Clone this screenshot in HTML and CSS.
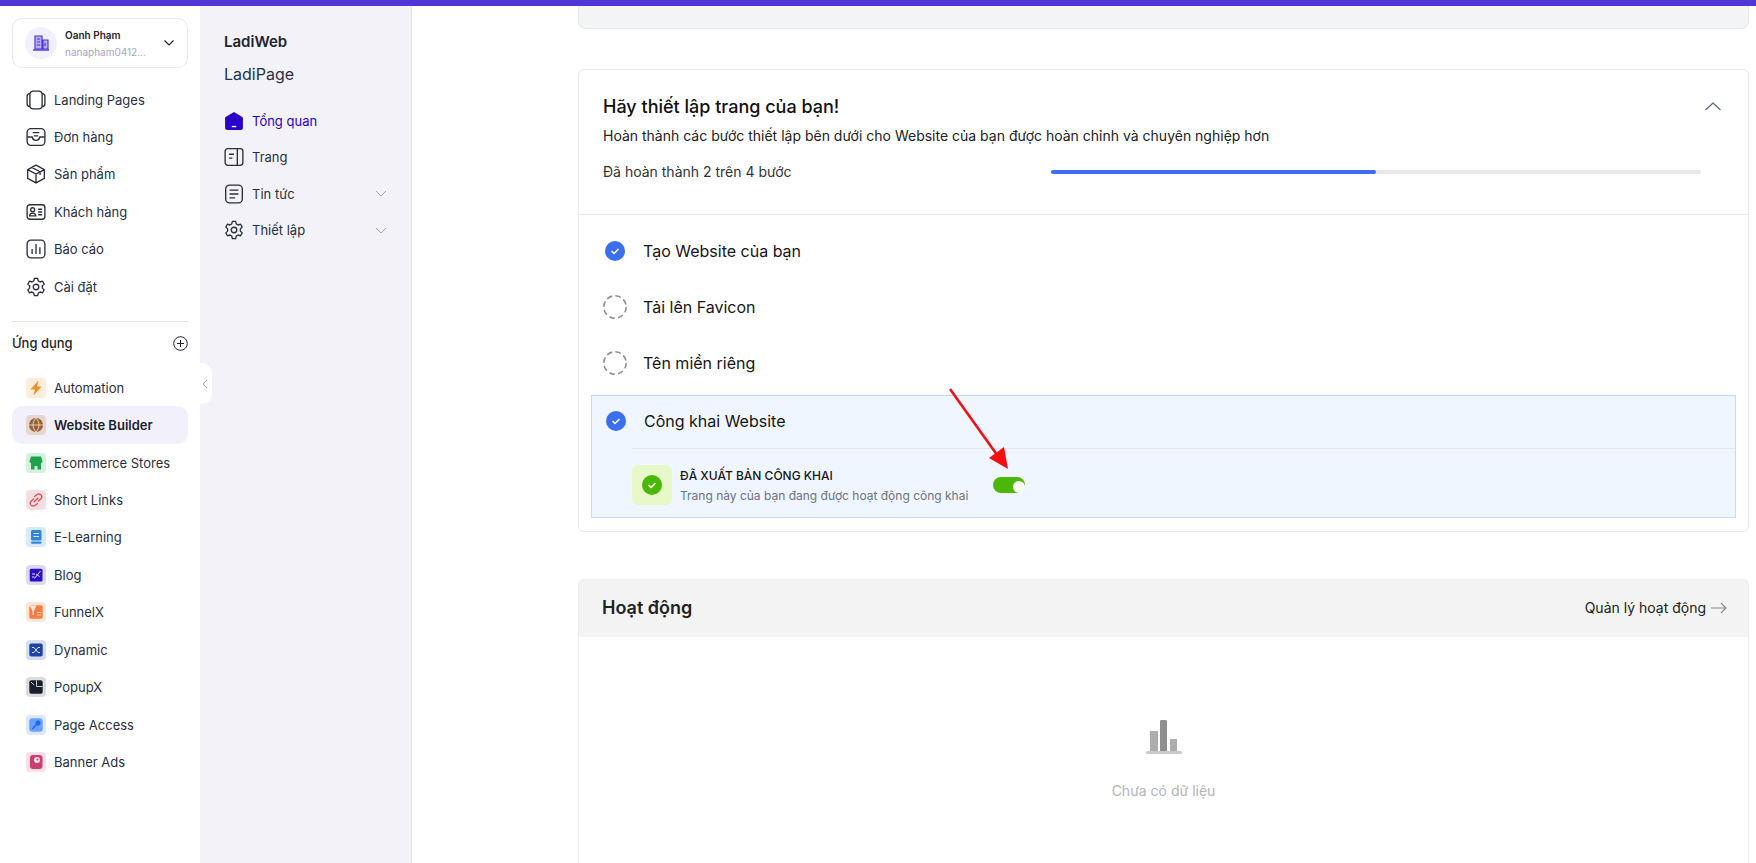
FILE: index.html

```html
<!DOCTYPE html>
<html lang="vi">
<head>
    <meta charset="UTF-8">
    <title>LadiWeb</title>
    <link rel="stylesheet" href="styles.css">
</head>
<body>
    <div class="topbar"></div>
    <div class="app">
        <aside class="sidebar">
            <div class="account">
                <div class="avatar">
                    <svg width="18" height="18" viewBox="0 0 18 18"><path d="M3 2h7v13H3zM11 6h5v9h-5z" fill="#b9aef0" stroke="#4f35d6" stroke-width="1.2"/><path d="M1 16h16" stroke="#4f35d6" stroke-width="1.4"/><path d="M5 5h3M5 8h3M5 11h3M13 9v3" stroke="#4f35d6" stroke-width="1.2"/></svg>
                </div>
                <div class="account-text">
                    <div class="account-name">Oanh Phạm</div>
                    <div class="account-mail">nanapham0412...</div>
                </div>
                <svg class="account-caret" width="12" height="8" viewBox="0 0 12 8"><path d="M1.500 1.500 6 6l4.500-4.500" fill="none" stroke="#1f2430" stroke-width="1.200"/></svg>
            </div>

            <nav class="nav">
                <a class="nav-row">
                    <svg class="line-icon" viewBox="0 0 18 18"><rect x="3.500" y="1" width="11" height="16" rx="3"/><path d="M3.500 3C2 3.300 1 4 1 5.500v7c0 1.500 1 2.200 2.500 2.500M14.500 3c1.500.3 2.500 1 2.500 2.500v7c0 1.500-1 2.200-2.500 2.500"/></svg>
                    Landing Pages
                </a>
                <a class="nav-row">
                    <svg class="line-icon" viewBox="0 0 18 18"><rect x="1" y="1.500" width="16" height="15" rx="3.500"/><path d="M1 9h4.500c.5 2 1.800 3 3.500 3s3-1 3.500-3H17M6 5h6M7 8h4"/></svg>
                    Đơn hàng
                </a>
                <a class="nav-row">
                    <svg class="line-icon" viewBox="0 0 18 18"><path d="M9 1l7.500 4v8L9 17l-7.500-4V5zM1.500 5 9 9l7.500-4M9 9v8M5.200 3l7.500 4v3"/></svg>
                    Sản phẩm
                </a>
                <a class="nav-row">
                    <svg class="line-icon" viewBox="0 0 18 18"><rect x="1" y="2.500" width="16" height="13" rx="2.500"/><circle cx="6" cy="7" r="1.800"/><path d="M3.200 12.500c.2-1.800 1.300-2.500 2.800-2.500s2.600.7 2.800 2.500zM11 6.500h3.500M11 9h3.500M11 11.500h3.500"/></svg>
                    Khách hàng
                </a>
                <a class="nav-row">
                    <svg class="line-icon" viewBox="0 0 18 18"><rect x="1" y="1" width="16" height="16" rx="3.500"/><path d="M5.500 9v4.500M9 4.500v9M12.500 7.500v6"/></svg>
                    Báo cáo
                </a>
                <a class="nav-row">
                    <svg class="line-icon" viewBox="0 0 18 18"><circle cx="9" cy="9" r="2.500"/><path d="M7.500 1.300h3l.5 2.200 1.700 1 2.200-.7 1.500 2.600-1.700 1.600v2l1.700 1.600-1.500 2.600-2.200-.7-1.700 1-.5 2.200h-3l-.5-2.200-1.700-1-2.200.7-1.500-2.600 1.700-1.600v-2L1.600 6.400l1.500-2.600 2.200.7 1.700-1z" stroke-linejoin="round"/></svg>
                    Cài đặt
                </a>
            </nav>

            <div class="apps-head">
                <span>Ứng dụng</span>
                <svg width="15" height="15" viewBox="0 0 15 15"><circle cx="7.500" cy="7.500" r="6.800" fill="none" stroke="#1f2430"/><path d="M7.500 4v7M4 7.500h7" stroke="#1f2430"/></svg>
            </div>

            <nav class="apps">
                <a class="app-row">
                    <span class="app-icon tint-orange"><svg viewBox="0 0 20 20"><path d="M12.500 2.500 4.500 11.500H9L7.500 17.500 15.500 8.500H11z" fill="#e8912d"/></svg></span>
                    Automation
                </a>
                <a class="app-row active">
                    <span class="app-icon tint-brown"><svg viewBox="0 0 20 20"><circle cx="10" cy="10" r="7" fill="#9a6233"/><path d="M3 10h14M10 3c-4 4.500-4 9.500 0 14M10 3c4 4.500 4 9.500 0 14" fill="none" stroke="#e4d7ce" stroke-width=".9"/></svg></span>
                    Website Builder
                </a>
                <a class="app-row">
                    <span class="app-icon tint-green"><svg viewBox="0 0 20 20"><path d="M5 3.500h10l1.500 4.500c0 1.500-1 2-1.500 2v6.500h-3.500V13h-3v3.500H5V10c-.5 0-1.500-.5-1.500-2z" fill="#1fa34a"/></svg></span>
                    Ecommerce Stores
                </a>
                <a class="app-row">
                    <span class="app-icon tint-red"><svg viewBox="0 0 20 20"><path d="M8.500 6.500 11 4.500c1.500-1 3.500-.5 4.300.8.800 1.400.4 3-.8 4L12.500 11M11.500 13.500 9 15.500c-1.500 1-3.500.5-4.300-.8-.8-1.400-.4-3 .8-4l2-1.700M8 12l4-4" fill="none" stroke="#d9484f" stroke-width="1.200" stroke-linecap="round"/></svg></span>
                    Short Links
                </a>
                <a class="app-row">
                    <span class="app-icon tint-blue"><svg viewBox="0 0 20 20"><rect x="5" y="3" width="10.500" height="10.500" rx="1.500" fill="#2f86d8"/><rect x="5" y="14.500" width="10.500" height="2.200" rx="1" fill="#2f86d8"/><path d="M7.500 6.500h5.500M7.500 9.500h5.500" stroke="#d8e9f9"/></svg></span>
                    E-Learning
                </a>
                <a class="app-row">
                    <span class="app-icon tint-violet"><svg viewBox="0 0 20 20"><rect x="3.700" y="3.700" width="12.800" height="12.800" rx="1.500" fill="#2a0fc4"/><path d="M6 9H9M6 12H8.500M8.500 13.500l6-7.500M10 9l3.500 2.500" stroke="#e0dcfa" fill="none"/></svg></span>
                    Blog
                </a>
                <a class="app-row">
                    <span class="app-icon tint-peach"><svg viewBox="0 0 20 20"><rect x="3.300" y="3.300" width="13.400" height="13.400" rx="2" fill="#ff7a3d"/><path d="M3.500 3.500h7L8 9v4H6.500V9z" fill="#ffe6da"/><path d="M11 10.500h4M11 13h4" stroke="#ffe6da" fill="none"/></svg></span>
                    FunnelX
                </a>
                <a class="app-row">
                    <span class="app-icon tint-navy"><svg viewBox="0 0 20 20"><rect x="3.300" y="3.500" width="13.400" height="13" rx="2" fill="#1c43a8"/><path d="M6 7.500h2l4 5h2M6 12.500h2l4-5h2" stroke="#dbe3f5" fill="none"/></svg></span>
                    Dynamic
                </a>
                <a class="app-row">
                    <span class="app-icon tint-gray"><svg viewBox="0 0 20 20"><rect x="3.300" y="3.300" width="13.400" height="13.400" rx="2" fill="#1b1e2b"/><path d="M10.500 3.300v6.200M10.500 9.500h6.200M5 5l3 3" stroke="#dcdcdc" stroke-width=".9" fill="none"/></svg></span>
                    PopupX
                </a>
                <a class="app-row">
                    <span class="app-icon tint-sky"><svg viewBox="0 0 20 20"><rect x="3.300" y="3.300" width="13.400" height="13.400" rx="3" fill="#66a1ff"/><circle cx="12" cy="8" r="2.500" fill="#2563eb"/><path d="m10.500 9.500-4 4.500" stroke="#2563eb" stroke-width="1.500"/></svg></span>
                    Page Access
                </a>
                <a class="app-row">
                    <span class="app-icon tint-pink"><svg viewBox="0 0 20 20"><rect x="4" y="3" width="12.500" height="14" rx="3" fill="#c93f6f"/><circle cx="11" cy="8" r="3" fill="#f8dfe8"/><circle cx="11.500" cy="7.500" r="1" fill="#c93f6f"/></svg></span>
                    Banner Ads
                </a>
            </nav>
        </aside>

        <aside class="subnav">
            <div class="collapse-tab">
                <svg width="6" height="10" viewBox="0 0 6 10"><path d="M5 1 1 5l4 4" fill="none" stroke="#9aa0ad"/></svg>
            </div>
            <div class="sub-brand">LadiWeb</div>
            <div class="sub-site">LadiPage</div>
            <a class="sub-row current">
                <svg class="solid-icon" viewBox="0 0 18 18"><path d="M9 1l7.500 4.500c.4.300.5.600.5 1V15c0 1.300-.8 2-2 2H3c-1.200 0-2-.7-2-2V6.500c0-.4.100-.7.500-1z" fill="#2a00c8"/><path d="M7 14h4" stroke="#fff" stroke-width="1.200"/></svg>
                Tổng quan
            </a>
            <a class="sub-row">
                <svg class="line-icon" viewBox="0 0 18 18"><rect x="1" y="1.500" width="16" height="15" rx="2.500"/><path d="M12 1.500v15M4.500 6.500h4.500M4.500 10h3"/></svg>
                Trang
            </a>
            <a class="sub-row">
                <svg class="line-icon" viewBox="0 0 18 18"><rect x="1.500" y="1" width="15" height="16" rx="3.500"/><path d="M5 5.500h8M5 9h8M5 12.500h5"/></svg>
                Tin tức
                <svg class="sub-caret" width="12" height="7" viewBox="0 0 12 7"><path d="M1 1l5 5 5-5" fill="none" stroke="#9aa0ad"/></svg>
            </a>
            <a class="sub-row">
                <svg class="line-icon" viewBox="0 0 18 18"><circle cx="9" cy="9" r="2.500"/><path d="M7.500 1.300h3l.5 2.200 1.700 1 2.200-.7 1.500 2.600-1.700 1.600v2l1.700 1.600-1.500 2.600-2.200-.7-1.700 1-.5 2.200h-3l-.5-2.200-1.700-1-2.200.7-1.500-2.600 1.700-1.600v-2L1.600 6.400l1.500-2.600 2.200.7 1.700-1z" stroke-linejoin="round"/></svg>
                Thiết lập
                <svg class="sub-caret" width="12" height="7" viewBox="0 0 12 7"><path d="M1 1l5 5 5-5" fill="none" stroke="#9aa0ad"/></svg>
            </a>
        </aside>

        <main class="main">
            <div class="stub-card"></div>

            <section class="setup-card">
                <div class="setup-head">
                    <div class="setup-title-row">
                        <h2 class="setup-title">Hãy thiết lập trang của bạn!</h2>
                        <svg width="16" height="9" viewBox="0 0 16 9"><path d="M.5 8 8 1l7.500 7" fill="none" stroke="#56657a" stroke-width="1.200"/></svg>
                    </div>
                    <p class="setup-desc">Hoàn thành các bước thiết lập bên dưới cho Website của bạn được hoàn chỉnh và chuyên nghiệp hơn</p>
                    <div class="progress-row">
                        <span>Đã hoàn thành 2 trên 4 bước</span>
                        <div class="progress-track"><div class="progress-fill" style="width: 50%"></div></div>
                    </div>
                </div>

                <div class="steps">
                    <div class="step">
                        <svg class="step-icon" viewBox="0 0 24 24"><circle cx="12" cy="12" r="10" fill="#3b6ff0"/><path d="m8.500 12 2.500 2.500 4.500-4.500" fill="none" stroke="#fff" stroke-width="1.500"/></svg>
                        Tạo Website của bạn
                    </div>
                    <div class="step">
                        <svg class="step-icon" viewBox="0 0 24 24"><circle cx="12" cy="12" r="11.200" fill="none" stroke="#8b8f98" stroke-width="1.600" stroke-dasharray="5.600 3.200"/></svg>
                        Tải lên Favicon
                    </div>
                    <div class="step">
                        <svg class="step-icon" viewBox="0 0 24 24"><circle cx="12" cy="12" r="11.200" fill="none" stroke="#8b8f98" stroke-width="1.600" stroke-dasharray="5.600 3.200"/></svg>
                        Tên miền riêng
                    </div>
                    <div class="step-open">
                        <div class="step step-inner">
                            <svg class="step-icon" viewBox="0 0 24 24"><circle cx="12" cy="12" r="10" fill="#3b6ff0"/><path d="m8.500 12 2.500 2.500 4.500-4.500" fill="none" stroke="#fff" stroke-width="1.500"/></svg>
                            Công khai Website
                        </div>
                        <div class="publish">
                            <div class="publish-badge">
                                <svg width="20" height="20" viewBox="0 0 20 20"><circle cx="10" cy="10" r="10" fill="#4bb806"/><path d="m6.500 10 2.500 2.500 4.500-4.500" fill="none" stroke="#fff" stroke-width="1.500"/></svg>
                            </div>
                            <div class="publish-text">
                                <div class="publish-title">ĐÃ XUẤT BẢN CÔNG KHAI</div>
                                <div class="publish-desc">Trang này của bạn đang được hoạt động công khai</div>
                            </div>
                            <div class="toggle"><span class="toggle-knob"></span></div>
                        </div>
                    </div>
                </div>
            </section>

            <section class="activity-card">
                <div class="activity-head">
                    <h2 class="activity-title">Hoạt động</h2>
                    <a class="activity-link">
                        Quản lý hoạt động
                        <svg width="16" height="12" viewBox="0 0 16 12"><path d="M0 6h15M10 1l5 5-5 5" fill="none" stroke="#8a8a8a" stroke-width="1.100"/></svg>
                    </a>
                </div>
                <div class="empty">
                    <svg width="36" height="34" viewBox="0 0 36 34"><path d="M4 11h8v20H4zM24 19h7v12h-7z" fill="#adadad"/><path d="M14 1.500c0-.8.700-1.500 1.500-1.500h4c.8 0 1.500.7 1.500 1.500V31h-7z" fill="#8f8f8f"/><rect y="31" width="36" height="3" rx="1.500" fill="#c9c9c9"/></svg>
                    <div class="empty-text">Chưa có dữ liệu</div>
                </div>
            </section>

            <!-- mui ten do tren anh chup -->
            <svg class="red-arrow" width="70" height="90" viewBox="0 0 70 90"><path d="M2 2 52 72" stroke="#f40f12" stroke-width="2.600"/><path d="M60 82 41 71 56 60z" fill="#f40f12"/></svg>
        </main>
    </div>
</body>
</html>
```

FILE: styles.css

```css
html, body {
    margin: 0;
    padding: 0;
    height: 100%;
    overflow: hidden;
    background: #fff;
    font-family: Inter, "Noto Sans", sans-serif;
    color: #1f2430;
}

.topbar {
    height: 6px;
    background: #5035d7;
}

.app {
    display: flex;
    height: 857px;
}

.line-icon {
    width: 20px;
    height: 20px;
    flex: none;
    fill: none;
    stroke: #2a2f3a;
    stroke-width: 1.2;
}

.solid-icon {
    width: 20px;
    height: 20px;
    flex: none;
}

/* first column */
.sidebar {
    width: 200px;
    flex: none;
    box-sizing: border-box;
    padding: 12px 12px 0;
}

.account {
    height: 50px;
    box-sizing: border-box;
    border: 1px solid #e7e6f2;
    border-radius: 10px;
    display: flex;
    align-items: center;
    padding: 0 12px;
}

.avatar {
    width: 32px;
    height: 32px;
    flex: none;
    border-radius: 50%;
    background: #f2f0fc;
    display: flex;
    align-items: center;
    justify-content: center;
}

.account-text {
    margin-left: 8px;
    flex: 1;
    min-width: 0;
}

.account-name {
    font-size: 10px;
    font-weight: 600;
    line-height: 14px;
}

.account-mail {
    font-size: 10px;
    line-height: 14px;
    margin-top: 3px;
    color: #a6a6c0;
}

.account-caret {
    flex: none;
    margin-right: 0;
}

.nav {
    margin-top: 13px;
    padding-bottom: 16px;
    border-bottom: 1px solid #e7e6f0;
}

.nav-row {
    height: 37.4px;
    display: flex;
    align-items: center;
    gap: 8px;
    padding-left: 14px;
    font-size: 13px;
    color: #2a2f3f;
}

.apps-head {
    display: flex;
    align-items: center;
    justify-content: space-between;
    font-size: 13px;
    font-weight: 500;
    margin-top: 12px;
    height: 18px;
}

.apps {
    margin-top: 16.6px;
}

.app-row {
    height: 37.45px;
    display: flex;
    align-items: center;
    gap: 8px;
    padding-left: 14px;
    font-size: 13px;
    color: #2a2f3f;
    border-radius: 10px;
}

.app-row.active {
    background: #f2f1fb;
    font-weight: 600;
    color: #1b1f2e;
}

.app-icon {
    width: 20px;
    height: 20px;
    flex: none;
    border-radius: 4px;
    display: block;
}

.app-icon svg {
    display: block;
    width: 20px;
    height: 20px;
}

.tint-orange { background: #fcecd9; }
.tint-brown { background: #e4d7ce; }
.tint-green { background: #d6f0dd; }
.tint-red { background: #f8dfdf; }
.tint-blue { background: #d8e9f9; }
.tint-violet { background: #dcd8fa; }
.tint-peach { background: #ffe6da; }
.tint-navy { background: #d6deef; }
.tint-gray { background: #dcdcdc; }
.tint-sky { background: #dbe8ff; }
.tint-pink { background: #f8dfe8; }

/* second column */
.subnav {
    position: relative;
    width: 212px;
    flex: none;
    box-sizing: border-box;
    background: #f2f2f8;
    border-right: 1px solid #e3e3ea;
    padding: 27px 0 0 24px;
}

.collapse-tab {
    position: absolute;
    left: 0;
    top: 357px;
    width: 12px;
    height: 41px;
    background: #fff;
    border-radius: 0 10px 10px 0;
    display: flex;
    align-items: center;
    padding-left: 2px;
    box-sizing: border-box;
}

.sub-brand {
    font-size: 15px;
    font-weight: 600;
    line-height: 18px;
}

.sub-site {
    font-size: 16px;
    line-height: 20px;
    margin: 13px 0 18.4px;
    color: #27304a;
}

.sub-row {
    height: 36.6px;
    display: flex;
    align-items: center;
    gap: 8px;
    font-size: 13px;
    color: #2a2f3f;
}

.sub-row.current {
    color: #2a00c8;
}

.sub-caret {
    margin-left: auto;
    margin-right: 24px;
}

/* main column */
.main {
    position: relative;
    flex: 1;
    min-width: 0;
    box-sizing: border-box;
    padding: 0 7px 0 166px;
}

.stub-card {
    height: 23px;
    box-sizing: border-box;
    background: #f3f4f6;
    border: 1px solid #e8e8e8;
    border-top: 0;
    border-radius: 0 0 8px 8px;
}

.setup-card {
    margin-top: 40px;
    height: 463px;
    box-sizing: border-box;
    border: 1px solid #e8e8e8;
    border-radius: 6px;
}

.setup-head {
    height: 145px;
    box-sizing: border-box;
    padding: 24px 27px 0 24px;
    border-bottom: 1px solid #e8e8e8;
}

.setup-title-row {
    display: flex;
    align-items: center;
    justify-content: space-between;
    height: 24px;
}

.setup-title {
    margin: 0;
    font-size: 18px;
    font-weight: 500;
    color: #111;
}

.setup-desc {
    margin: 8px 0 0;
    font-size: 14px;
    line-height: 20px;
    color: #222;
}

.progress-row {
    display: flex;
    align-items: center;
    justify-content: space-between;
    margin-top: 16px;
    padding-right: 20px;
    font-size: 14px;
    line-height: 20px;
    color: #333;
}

.progress-track {
    width: 650px;
    height: 4px;
    background: #e8e8e8;
    border-radius: 2px;
}

.progress-fill {
    height: 100%;
    background: #3b6ff0;
    border-radius: 2px;
}

.steps {
    padding: 8px 12px 0;
}

.step {
    height: 56px;
    display: flex;
    align-items: center;
    gap: 16px;
    padding-left: 12px;
    font-size: 16px;
    color: #161616;
}

.step-icon {
    width: 24px;
    height: 24px;
    flex: none;
}

.step-open {
    height: 123px;
    margin-top: 4px;
    box-sizing: border-box;
    background: #eff6ff;
    border: 1px solid #bfdbfe;
}

.step-inner {
    height: 50px;
    padding-bottom: 2px;
}

.publish {
    margin-left: 40px;
    padding-top: 16px;
    border-top: 1px solid #e2e6ec;
    display: flex;
    align-items: center;
}

.publish-badge {
    width: 40px;
    height: 40px;
    flex: none;
    background: #e8f9c9;
    border-radius: 6px;
    display: flex;
    align-items: center;
    justify-content: center;
}

.publish-text {
    margin-left: 8px;
}

.publish-title {
    font-size: 12px;
    font-weight: 500;
    line-height: 20px;
    padding-top: 1px;
    color: #161616;
}

.publish-desc {
    font-size: 12px;
    line-height: 19px;
    color: #6c7383;
}

.toggle {
    width: 32px;
    height: 16px;
    flex: none;
    margin-left: 25px;
    background: #4bb806;
    border-radius: 8px;
    position: relative;
}

.toggle-knob {
    position: absolute;
    right: 0;
    top: 4px;
    width: 12px;
    height: 12px;
    background: #fff;
    border-radius: 50%;
}

.activity-card {
    margin-top: 47px;
    height: 300px;
    box-sizing: border-box;
    border: 1px solid #eee;
    border-radius: 6px 6px 0 0;
}

.activity-head {
    height: 55px;
    padding: 0 21px 2px 23px;
    background: #f3f3f3;
    display: flex;
    align-items: center;
    justify-content: space-between;
}

.activity-title {
    margin: 0;
    font-size: 18px;
    font-weight: 600;
    color: #222;
}

.activity-link {
    display: flex;
    align-items: center;
    gap: 5px;
    font-size: 14px;
    color: #222;
}

.empty {
    display: flex;
    flex-direction: column;
    align-items: center;
    padding-top: 83px;
}

.empty-text {
    margin-top: 28px;
    font-size: 14px;
    color: #b5b5b5;
}

.red-arrow {
    position: absolute;
    left: 536px;
    top: 381px;
}
```
